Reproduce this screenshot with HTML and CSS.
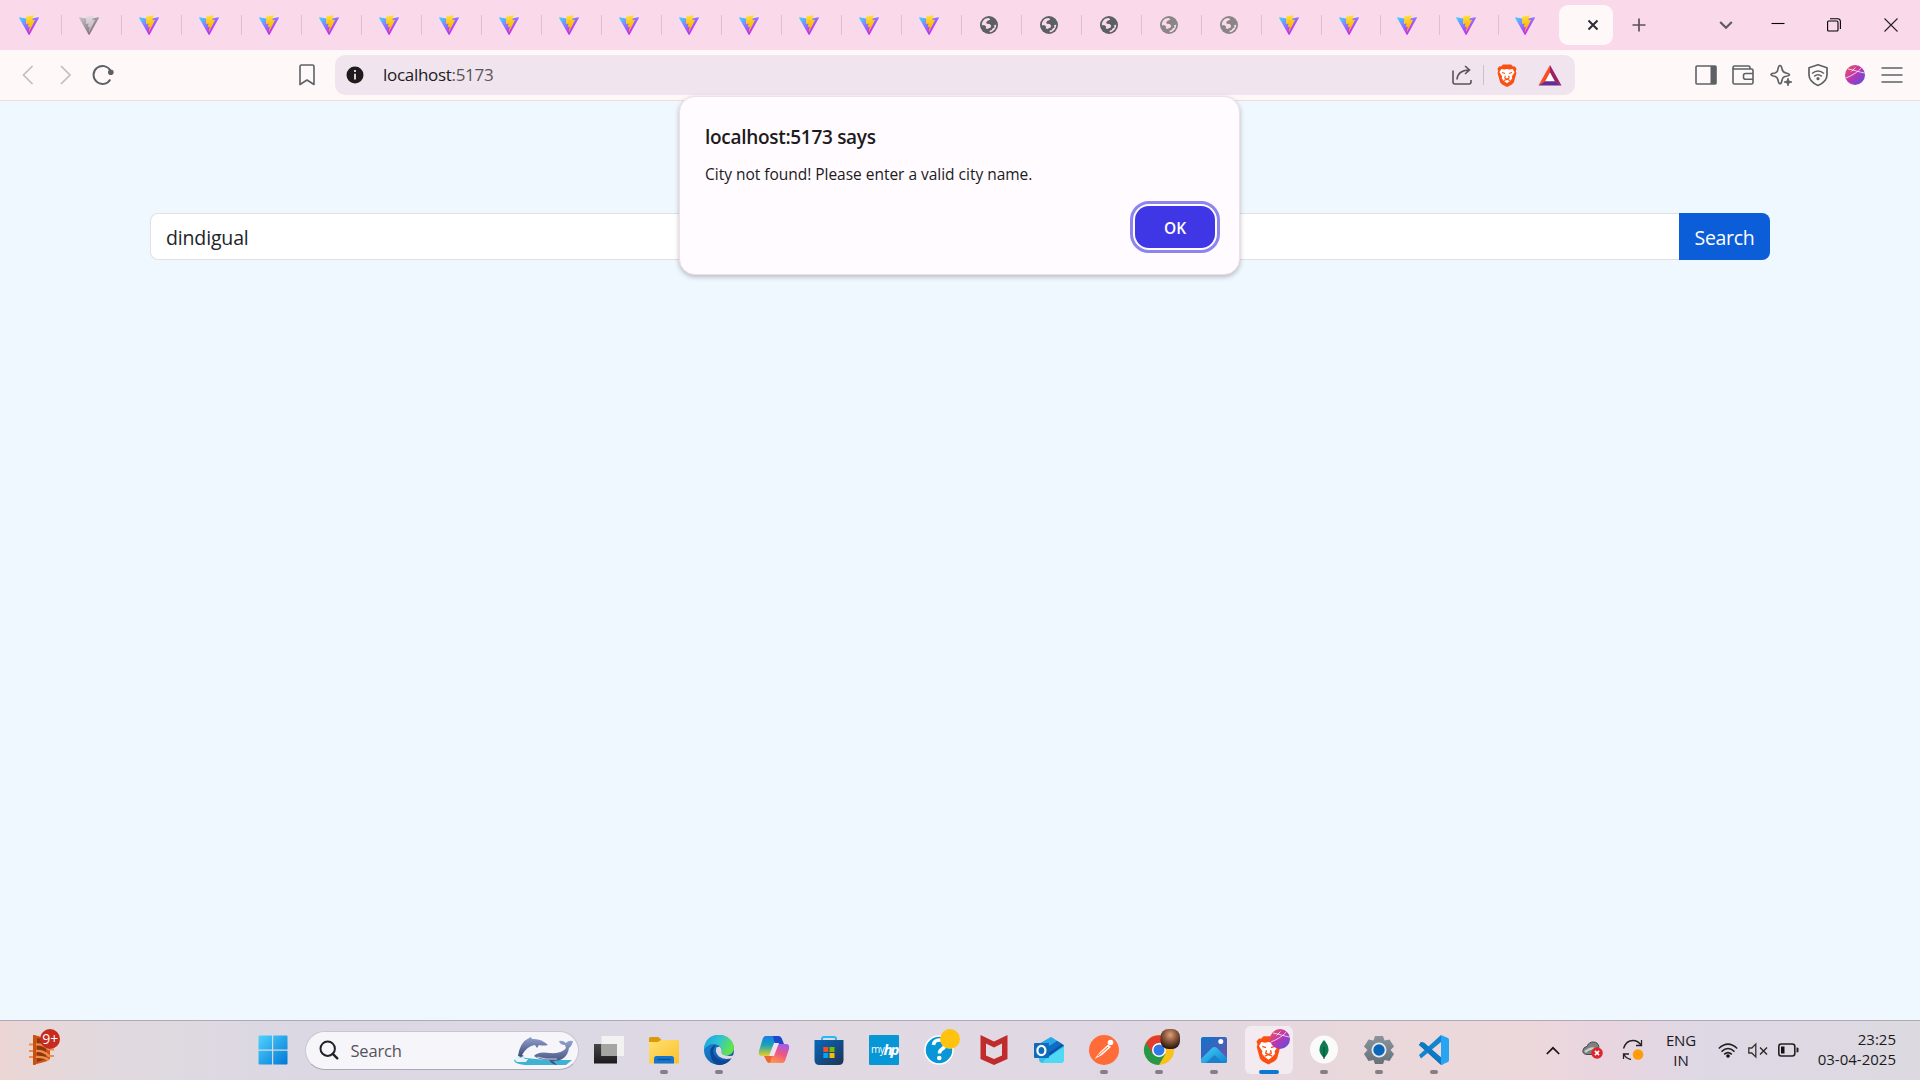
FILE: index.html
```html
<!DOCTYPE html>
<html lang="en">
<head>
<meta charset="utf-8">
<title>localhost:5173</title>
<link rel="stylesheet" href="styles.css">
</head>
<body>
<svg class="defs" aria-hidden="true">
  <defs>
    <linearGradient id="viteBody" x1="-.8%" x2="57.6%" y1="7.6%" y2="78.4%"><stop offset="0" stop-color="#41d1ff"/><stop offset="1" stop-color="#bd34fe"/></linearGradient>
    <linearGradient id="viteBolt" x1="43.4%" x2="50.3%" y1="2.2%" y2="89%"><stop offset="0" stop-color="#ffea83"/><stop offset=".083" stop-color="#ffdd35"/><stop offset="1" stop-color="#ffa800"/></linearGradient>
    <linearGradient id="orb" x1="0" y1="0" x2="1" y2="1"><stop offset="0" stop-color="#f6564b"/><stop offset=".5" stop-color="#b836b5"/><stop offset="1" stop-color="#4a55e0"/></linearGradient>
    <linearGradient id="win" x1="0" y1="0" x2="1" y2="1"><stop offset="0" stop-color="#4fd3ff"/><stop offset="1" stop-color="#0078d4"/></linearGradient>
    <linearGradient id="folder" x1="0" y1="0" x2="1" y2="1"><stop offset="0" stop-color="#ffe070"/><stop offset="1" stop-color="#fcc02c"/></linearGradient>
    <linearGradient id="edgeTop" x1="0" y1="0" x2="1" y2=".4"><stop offset="0" stop-color="#1f9be0"/><stop offset=".5" stop-color="#2cc3d5"/><stop offset="1" stop-color="#63e34b"/></linearGradient>
    <linearGradient id="edgeLow" x1="0" y1="0" x2="1" y2="1"><stop offset="0" stop-color="#1b8fdc"/><stop offset="1" stop-color="#0c4a9c"/></linearGradient>
    <linearGradient id="copA" x1="0" y1="0" x2="0" y2="1"><stop offset="0" stop-color="#1a7de8"/><stop offset=".45" stop-color="#17a3b8"/><stop offset="1" stop-color="#e9cf24"/></linearGradient>
    <linearGradient id="copB" x1=".7" y1="0" x2=".3" y2="1"><stop offset="0" stop-color="#a35bea"/><stop offset=".5" stop-color="#f1567f"/><stop offset="1" stop-color="#fb9a4c"/></linearGradient>
    <linearGradient id="store" x1="0" y1="0" x2="1" y2="1"><stop offset="0" stop-color="#0668bd"/><stop offset="1" stop-color="#1f3354"/></linearGradient>
    <linearGradient id="photo" x1="0" y1="0" x2="1" y2="1"><stop offset="0" stop-color="#0b74ce"/><stop offset="1" stop-color="#7450a8"/></linearGradient>
    <linearGradient id="hill" x1="0" y1="0" x2="1" y2="1"><stop offset="0" stop-color="#42d0fa"/><stop offset="1" stop-color="#0e83cf"/></linearGradient>
    <linearGradient id="gear" x1="0" y1="0" x2="0" y2="1"><stop offset="0" stop-color="#8b949b"/><stop offset="1" stop-color="#66717a"/></linearGradient>
    <linearGradient id="whale" x1="0" y1="0" x2="0" y2="1"><stop offset="0" stop-color="#92a3cf"/><stop offset="1" stop-color="#3c4775"/></linearGradient>
    <linearGradient id="taskA" x1="0" y1="0" x2="0" y2="1"><stop offset="0" stop-color="#474747"/><stop offset="1" stop-color="#1b1b1b"/></linearGradient>
    <radialGradient id="face" cx=".5" cy=".3" r=".7"><stop offset="0" stop-color="#dca27a"/><stop offset=".45" stop-color="#8f5a3d"/><stop offset="1" stop-color="#22140f"/></radialGradient>
  </defs>
  <symbol id="vite" viewBox="0 0 256 257">
    <path fill="url(#viteBody)" d="M255.153 37.938L134.897 252.976c-2.483 4.44-8.862 4.466-11.382.048L.875 37.958c-2.746-4.814 1.371-10.646 6.827-9.67l120.385 21.517a6.537 6.537 0 0 0 2.322-.004l117.867-21.483c5.438-.991 9.574 4.796 6.877 9.62Z"/>
    <path fill="url(#viteBolt)" d="M185.432.063L96.44 17.501a3.268 3.268 0 0 0-2.634 3.014l-5.474 92.456a3.268 3.268 0 0 0 3.997 3.378l24.777-5.718c2.318-.535 4.413 1.507 3.936 3.838l-7.361 36.047c-.495 2.426 1.782 4.5 4.151 3.78l15.304-4.649c2.372-.72 4.652 1.36 4.15 3.788l-11.698 56.621c-.732 3.542 3.979 5.473 5.943 2.437l1.313-2.028l72.516-144.72c1.215-2.423-.88-5.186-3.54-4.672l-25.505 4.922c-2.396.462-4.435-1.77-3.759-4.114l16.646-57.705c.677-2.35-1.37-4.583-3.769-4.113Z"/>
  </symbol>
  <symbol id="globe" viewBox="0 0 20 20">
    <circle cx="10" cy="10" r="9" fill="currentColor"/>
    <path fill="#fad9ea" d="M2.900 8.800C3.300 5.600 6 3 9.300 2.900L11.200 4 10.700 5.100 8.600 5.700 7.200 7.300 7.800 8.700 10.600 9 12.100 10.600 11.700 12.400 9.800 13.200 8.300 14.100 6.600 13.200 7.200 11.500 5 10.100 3 10.400z"/>
    <path fill="#fad9ea" d="M17.200 9.400C17.400 13.400 14.500 16.600 10.800 17.200L10.600 15.800 12.800 15 13.800 13.200 15.600 12.600 14.900 10.600z"/>
  </symbol>
  <symbol id="lion" viewBox="0 0 20 23">
    <path fill="#fb5012" d="M6 .5h8l2 2 1.600-.3 2 2.500-.8 2.300.6 2-2.500 9.300-2 2.200L10 23l-4.900-2.500-2-2.200L.6 9l.6-2L.4 4.700l2-2.500L4 2.500z"/>
    <path fill="#fff" d="M4.300 5l3 .6L10 5l2.700.6 3-.6 1.900 3.300-2.800 4.300.5 1.700-2 2.400L10 19.300l-3.300-2.600-2-2.400.5-1.700L2.400 8.300z"/>
    <path fill="none" stroke="#fb5012" stroke-width="1.100" d="M5 8.600l3 1 M15 8.600l-3 1 M8.400 11.700L7.800 14 10 15.200 12.200 14 11.600 11.700 M7 16.400l3-1.200 3 1.200"/>
  </symbol>
  <symbol id="planet" viewBox="0 0 20 20">
    <circle cx="10" cy="10" r="10" fill="url(#orb)"/>
    <path d="M1 13C7 10.500 13 7 16.500 2.800 M3 4C9 5 14 7 19.500 8 M6.500 6.500L10.500 2.500" fill="none" stroke="#fff" stroke-opacity=".75" stroke-width="1"/>
  </symbol>
</svg>

<header class="tabs">
  <div class="tab"><svg><use href="#vite"/></svg></div>
  <div class="tab asleep"><svg><use href="#vite"/></svg></div>
  <div class="tab"><svg><use href="#vite"/></svg></div>
  <div class="tab"><svg><use href="#vite"/></svg></div>
  <div class="tab"><svg><use href="#vite"/></svg></div>
  <div class="tab"><svg><use href="#vite"/></svg></div>
  <div class="tab"><svg><use href="#vite"/></svg></div>
  <div class="tab"><svg><use href="#vite"/></svg></div>
  <div class="tab"><svg><use href="#vite"/></svg></div>
  <div class="tab"><svg><use href="#vite"/></svg></div>
  <div class="tab"><svg><use href="#vite"/></svg></div>
  <div class="tab"><svg><use href="#vite"/></svg></div>
  <div class="tab"><svg><use href="#vite"/></svg></div>
  <div class="tab"><svg><use href="#vite"/></svg></div>
  <div class="tab"><svg><use href="#vite"/></svg></div>
  <div class="tab"><svg><use href="#vite"/></svg></div>
  <div class="tab"><svg><use href="#globe"/></svg></div>
  <div class="tab"><svg><use href="#globe"/></svg></div>
  <div class="tab"><svg><use href="#globe"/></svg></div>
  <div class="tab dim"><svg><use href="#globe"/></svg></div>
  <div class="tab dim"><svg><use href="#globe"/></svg></div>
  <div class="tab"><svg><use href="#vite"/></svg></div>
  <div class="tab narrow first"><svg><use href="#vite"/></svg></div>
  <div class="tab narrow"><svg><use href="#vite"/></svg></div>
  <div class="tab narrow"><svg><use href="#vite"/></svg></div>
  <div class="tab last"><svg><use href="#vite"/></svg></div>
  <div class="tab-active"><svg width="12" height="12" viewBox="0 0 12 12"><path d="M1.500 1.500l9 9M10.500 1.500l-9 9" stroke="#2b2b33" stroke-width="2"/></svg></div>
  <svg class="new-tab" width="14" height="14" viewBox="0 0 14 14"><path d="M7 .5v13M.5 7h13" stroke="#5a5358" stroke-width="1.700"/></svg>
  <div class="window-buttons">
    <svg width="14" height="14" viewBox="0 0 14 14"><path d="M1.200 4L7 9.800 12.800 4" fill="none" stroke="#5f5a60" stroke-width="2.200"/></svg>
    <svg width="14" height="14" viewBox="0 0 14 14"><path d="M.5 5.500h13" stroke="#000" stroke-width="1.100"/></svg>
    <svg width="14" height="14" viewBox="0 0 14 14"><path d="M.6 4q0-1 1-1h8q1.400 0 1.400 1.400V12q0 1-1 1H1.600q-1 0-1-1zM3 .7h7.500q2.900 0 2.900 2.900V11" fill="none" stroke="#000" stroke-width="1.100"/></svg>
    <svg width="14" height="14" viewBox="0 0 14 14"><path d="M.5.5l13 13M13.500.5l-13 13" stroke="#222" stroke-width="1.100"/></svg>
  </div>
</header>

<nav class="toolbar">
  <svg class="back" width="12" height="20" viewBox="0 0 12 20"><path d="M10.500 1L1.500 10l9 9" fill="none" stroke="#c3bdc1" stroke-width="1.700"/></svg>
  <svg class="forward" width="12" height="20" viewBox="0 0 12 20"><path d="M1 1l9 9-9 9" fill="none" stroke="#c3bdc1" stroke-width="1.700"/></svg>
  <svg class="reload" width="22" height="22" viewBox="0 0 22 22"><path d="M18.300 15.500A9 9 0 1 1 18.400 6.600" fill="none" stroke="#5d6166" stroke-width="1.900"/><circle cx="18.800" cy="8.300" r="2.800" fill="#5d6166"/></svg>
  <svg class="bookmark" width="16" height="22" viewBox="0 0 16 22"><path d="M1 2.500Q1 1 2.500 1h11Q15 1 15 2.500v18L8 16 1 20.500z" fill="none" stroke="#5d6166" stroke-width="1.600" stroke-linejoin="round"/></svg>
  <div class="address">
    <svg class="info" width="18" height="18" viewBox="0 0 18 18"><circle cx="9" cy="9" r="8.500" fill="#201a1c"/><path d="M9 4v2M9 7.700V13.500" stroke="#eee5ee" stroke-width="1.800"/></svg>
    <span class="url">localhost<i>:5173</i></span>
    <svg class="share" width="20" height="20" viewBox="0 0 20 20"><path d="M1 5.500V17Q1 19 3 19H17Q19 19 19 17v-2M5 14.500Q5.500 5.500 17 5M13 1l4.500 4L13 9" fill="none" stroke="#5c5259" stroke-width="1.600"/></svg>
    <span class="divider"></span>
    <svg class="brave" width="20" height="23"><use href="#lion"/></svg>
    <svg width="24" height="21" viewBox="0 0 24 21"><path d="M12 0L.5 20.500 8 16l4-8z" fill="#fb4b27"/><path d="M12 0l11.500 20.500L16 16l-4-8z" fill="#9e1f63"/><path d="M.5 20.500h23L16.500 16h-9z" fill="#662d91"/><path d="M12 7.500L16.800 16.300H7.200z" fill="#fff"/></svg>
  </div>
  <div class="actions">
    <svg width="22" height="20" viewBox="0 0 22 20"><rect x="1" y="1" width="20" height="18" rx="1" fill="none" stroke="#5d6166" stroke-width="1.600"/><path d="M15.500 1h5.500v18h-5.500z" fill="#5d6166"/></svg>
    <svg width="22" height="20" viewBox="0 0 22 20"><path d="M18 4V2.500Q18 1 16.500 1h-14Q1 1 1 2.500v15Q1 19 2.500 19h17q1.500 0 1.500-1.500V5.500Q21 4 19.500 4H2.500Q1 4 1 2.800M21 8.500h-7.500Q11.500 8.500 11.500 10.500v1.700q0 2 2 2H21" fill="none" stroke="#5d6166" stroke-width="1.600"/></svg>
    <svg width="22" height="22" viewBox="0 0 22 22"><path d="M10 1.500Q11.500 1.500 12 5q.5 3 4 4 3.500 1 3.500 1.700 0 1-4.500 1.800-2.500.5-3 4Q11.300 19.800 10 19.800T8 16q-.6-3-3.500-3.700Q1 11.500 1 10.500T5 9q2.600-.6 3-4Q8.500 1.500 10 1.500z" fill="#fff8f8" stroke="#5d6166" stroke-width="1.600"/><path d="M18 14l1 3 3 1-3 1-1 3-1-3-3-1 3-1z" fill="#5d6166" stroke="#5d6166" stroke-width=".8"/></svg>
    <svg width="22" height="22" viewBox="0 0 22 22"><path d="M11 .8l9 3v7q0 7-9 10.700Q2 17.800 2 10.800v-7z" fill="none" stroke="#5d6166" stroke-width="1.700" stroke-linejoin="round"/><path d="M5 9.500q6-5 12 0M7.200 12.300q3.800-3 7.600 0" fill="none" stroke="#5d6166" stroke-width="1.600"/><circle cx="11" cy="14.700" r="1.600" fill="#5d6166"/></svg>
    <svg width="20" height="20"><use href="#planet"/></svg>
    <svg class="menu" width="22" height="18" viewBox="0 0 22 18"><path d="M.5 2h21M.5 9h21M.5 16h21" stroke="#5d6166" stroke-width="1.700"/></svg>
  </div>
</nav>

<main class="page">
  <form class="search-group">
    <div class="field">dindigual</div>
    <div class="submit">Search</div>
  </form>
</main>

<section class="dialog" role="alertdialog">
  <h1>localhost:5173 says</h1>
  <p>City not found! Please enter a valid city name.</p>
  <div class="ok">OK</div>
</section>

<footer class="taskbar">
  <svg class="widget" width="40" height="40" viewBox="0 0 40 40">
    <path d="M8 5l5 1 12 4v19l-4 2.500L8 35z" fill="#cf5513"/><path d="M12 8l9 2v19l-9 3z" fill="#8f3709"/>
    <path d="M4 15h6q8-1 14 5h5M4 21.500h6q8-1 14 5h5M4 27.500h6q8-1 14 3" transform="translate(0 -.5)" fill="none" stroke="#ee8c4f" stroke-width="2.200"/><path d="M8 5l3 .6v28.800L8 35z" fill="#c9500f"/>
    <circle cx="25" cy="9" r="10" fill="#c72b20"/><text x="25.200" y="14" text-anchor="middle" class="badge-text">9+</text>
  </svg>
  <svg class="start" width="30" height="30" viewBox="0 0 30 30"><path d="M.5 1.500Q.5.500 1.500.500H14v14H.5zM15.200.5H28.500q1 0 1 1v13H15.200zM.5 15.700H14v13.800H1.500q-1 0-1-1zM15.200 15.700h14.300v12.800q0 1-1 1H15.200z" fill="url(#win)"/></svg>
  <div class="find">
    <svg width="20" height="20" viewBox="0 0 20 20"><circle cx="8.700" cy="8.700" r="7.200" fill="none" stroke="#222" stroke-width="2"/><path d="M13.800 13.800l4.500 4.500" stroke="#222" stroke-width="2.400" stroke-linecap="round"/></svg>
    <span>Search</span>
    <svg class="sea" width="60" height="32" viewBox="0 0 60 32">
      <path d="M1 24q3-4 12-2l20 2 26 0-6 5H12Q1 28 1 24z" fill="#3fb2d3"/><path d="M1 23l4-3 2 2 3-1 2 2 3 0-2 3H4z" fill="#e3f5fa"/>
      <path d="M5 20Q7 6 16 2l2-1 1 2q9-1 16 6-5 1-9 0l-2 3-2-3Q14 10 9 19l2 1-3 1z" fill="url(#whale)"/>
      <path d="M21 20q4-5 16-3 12 1 16-5l-1-3q-5 0-6-4 4-1 7 2 2-3 7-2-1 5-4 7-2 13-16 13l4 4q-6-1-8-5-10 0-15-4z" fill="url(#whale)"/>
      <path d="M24 21q8 3 20 2" stroke="#c7d1ea" stroke-width="1" fill="none"/>
    </svg>
  </div>
  <div class="apps">
    <div class="app"><svg viewBox="0 0 40 40"><path d="M5 14h23v19.500H5z" fill="url(#taskA)"/><path d="M12.500 6h22.500v20H12.500z" fill="#f3f3f3" opacity=".96"/><path d="M12.500 14H28v12H12.500z" fill="#a5a5a3"/></svg></div>
    <div class="app open"><svg viewBox="0 0 40 40"><path d="M5 8.500Q5 7 6.500 7h8l3 3v6H5z" fill="#dd9a08"/><path d="M5 12h9l3-2h16.500q1.500 0 1.500 1.500v21q0 1-1 1H5z" fill="url(#folder)"/><path d="M10 33.500v-5q0-2.500 2.500-2.500h15q2.500 0 2.500 2.500v5z" fill="#1375cd"/><path d="M13.500 29.500h13" stroke="#0b4f97" stroke-width="1.200"/></svg></div>
    <div class="app open"><svg viewBox="0 0 40 40"><circle cx="20" cy="20" r="15" fill="url(#edgeLow)"/><path d="M5 18Q7 5 20 5c9 0 15 6 15 13 0 5-4 7.500-8 7.500-4 0-6-1.500-4.500-3.500Q24 19 20 15.500 12 11 5 19z" fill="url(#edgeTop)"/><path d="M12 27Q9 17 17 14.500 11 22 18 28q7 5 14 1-5 6-12 6-6-1-8-8z" fill="#0b4796"/><path d="M17.500 17.500q-2 5 2.500 9 5 4 13.500 1.500l1.500-3q-3 1.500-8 .5-5-.5-4.500-3.500 1-3-2-5.500z" fill="#e0d9e3"/></svg></div>
    <div class="app"><svg viewBox="0 0 40 40"><path d="M12 6h12q2.500 0 1.500 3l-5 14q-1 3-4 3H8q-4 0-3-5L8 11q1-5 4-5z" fill="url(#copA)"/><path d="M19 6h5q3 0 4 3l2 5h-6q-3 0-4-3z" fill="#1c49cc"/><path d="M28 33H16q-3 0-1.500-3l5-13q1-3 4-3H32q4 0 3 5l-3 9q-1 5-4 5z" fill="url(#copB)"/><path d="M20 13h5l-5 13h-5z" fill="#eee3ee"/><path d="M10 26h8l-2 7q-3 0-4-3z" fill="#ed6631"/></svg></div>
    <div class="app"><svg viewBox="0 0 40 40"><path d="M13 12V9q0-2 2-2h10q2 0 2 2v3" fill="none" stroke="#27b9f2" stroke-width="2"/><path d="M5.500 10h29v20q0 5-5 5h-19q-5 0-5-5z" fill="url(#store)"/><path d="M14.300 17h5v5h-5z" fill="#f25022"/><path d="M20.500 17h5v5h-5z" fill="#7fba00"/><path d="M14.300 23h5v5h-5z" fill="#00a4ef"/><path d="M20.500 23h5v5h-5z" fill="#ffb900"/></svg></div>
    <div class="app"><svg viewBox="0 0 40 40"><rect x="5" y="5" width="30" height="30" rx="1" fill="#0796d6"/><text x="7" y="23" class="hp-my">my</text><text x="19.500" y="25" class="hp-hp">hp</text></svg></div>
    <div class="app"><svg viewBox="0 0 40 40"><circle cx="20" cy="20" r="14" fill="#0796d6" stroke="#fff" stroke-width="1.500"/><path d="M14.500 15q.5-5 6-5t5.500 4.500q0 3-3.500 5-2 1.200-2 4" fill="none" stroke="#fff" stroke-width="3.600"/><circle cx="20.300" cy="28" r="2.300" fill="#fff"/><circle cx="31" cy="9" r="10" fill="#ffc20e"/></svg></div>
    <div class="app"><svg viewBox="0 0 40 40"><path d="M6.500 5L20 11.500 33.500 5v24L20 35 6.500 29z" fill="#c02b2b"/><path d="M12 13.500l8 4 8-4v12L20 29l-8-3.500z" fill="#e2d9e2"/></svg></div>
    <div class="app"><svg viewBox="0 0 40 40"><path d="M10 14L22 7l13 8v14q0 4-4 4H14q-4 0-4-4z" fill="#2fc4ea"/><path d="M10 14L22 7l6 4-14 9z" fill="#28a8ea"/><path d="M28 11l7 4.500L20 26v-8z" fill="#0a50a5"/><path d="M28 11l5 3-13 9v-7z" fill="#0f6cc4"/><path d="M14 33q0-3 6-6L35 17v12q0 4-4 4z" fill="#50d9f5"/><rect x="5" y="13" width="15" height="15" rx="1" fill="#0f6cbd"/><ellipse cx="12.400" cy="20.500" rx="4" ry="4.700" fill="none" stroke="#fff" stroke-width="2.200"/></svg></div>
    <div class="app open"><svg viewBox="0 0 40 40"><circle cx="20" cy="20" r="15" fill="#ff6c37"/><path d="M10.500 29l6-7.500 7.500-7 3 2.500-9 8z" fill="#fff" opacity=".95"/><circle cx="26.500" cy="12.500" r="2.800" fill="#fff"/><path d="M14 26l10-9" stroke="#ff6c37"/></svg></div>
    <div class="app open"><svg viewBox="0 0 40 40"><circle cx="20" cy="20" r="15" fill="#fbc116"/><path d="M7 12.500A15 15 0 0 0 20 35l6.500-11.200L20 20 7 12.500z" fill="#279847"/><path d="M20 12.800h13A15 15 0 0 0 7 12.500l6.500 11z" fill="#e33b2e"/><circle cx="20" cy="20" r="7" fill="#fff"/><circle cx="20" cy="20" r="5.500" fill="#2f78e8"/><rect x="21.500" y="-1" width="19.500" height="20" rx="8" fill="url(#face)"/></svg></div>
    <div class="app open"><svg viewBox="0 0 40 40"><rect x="7" y="7" width="26" height="26" rx="2" fill="url(#photo)"/><path d="M7 29l11-11q2.500-2 5 0l10 10v3q0 2-2 2H9q-2 0-2-2z" fill="url(#hill)"/><path d="M12 33l8.500-8 8.500 8z" fill="#1c80ca"/><circle cx="26.800" cy="11.500" r="2.500" fill="#fff"/></svg></div>
    <div class="app active"><svg viewBox="0 0 40 40"><use href="#lion" x="7" y="5" width="25" height="30"/><use href="#planet" x="21" y="-1" width="20" height="20"/></svg></div>
    <div class="app open"><svg viewBox="0 0 40 40"><circle cx="20" cy="19.500" r="14" fill="#fafafa"/><path d="M20 10q9 10 0 18-9-8 0-18z" fill="#0d7a51"/><path d="M20 17v12" stroke="#064b34" stroke-width="1"/></svg></div>
    <div class="app open"><svg viewBox="0 0 40 40"><path d="M16 6h8l1.500 4.500 5-1 4.500 7-3.500 3.500 3.500 4-4.500 7-5-1L24 34h-8l-1.500-4-5 1L5 24l3.500-4L5 16.500l4.500-7 5 1z" fill="url(#gear)"/><circle cx="20" cy="20" r="7.500" fill="#e7e9ea"/><circle cx="20" cy="20" r="5.700" fill="#0a66b8"/></svg></div>
    <div class="app open"><svg viewBox="0 0 40 40"><path d="M7 12l20 16.500V35L5 15z" fill="#0a6eb6"/><path d="M7 28.500L27 12V5L5 25z" fill="#1385cf"/><path d="M5 15l2-3 3 .5L29 29v6L8 17z" fill="#0b79c5"/><path d="M27 5l7 3q1 .5 1 2v20q0 1.500-1 2l-7 3z" fill="#27a5f3"/></svg></div>
  </div>
  <div class="tray">
    <svg class="more" width="14" height="9" viewBox="0 0 14 9"><path d="M.8 8L7 1.800 13.200 8" fill="none" stroke="#151515" stroke-width="1.700"/></svg>
    <svg class="cloud" width="21" height="20" viewBox="0 0 21 20"><path d="M5 14.500Q0 14 1 10q.5-3 4-3.500Q7 1.500 11.500 2q4.500 0 5.500 5l-4 7.500z" fill="#7c8280" stroke="#454b49" stroke-width="1"/><path d="M3 12q6-5 10-3" stroke="#c9cfcd" stroke-width="2.400" fill="none"/><circle cx="15" cy="13" r="5.800" fill="#dc2630"/><path d="M12.900 10.900l4.200 4.200M17.100 10.900l-4.200 4.200" stroke="#fff" stroke-width="1.500"/></svg>
    <svg class="sync" width="22" height="22" viewBox="0 0 22 22"><path d="M1.500 9.500Q4 1.500 11 1.500q5 0 8.500 5M14 6.500h5.500V1M9 20.500q-5-1-7-5M1.500 20v-5H7" fill="none" stroke="#222" stroke-width="1.300"/><circle cx="16" cy="15.500" r="5.300" fill="#ff9c0a"/></svg>
    <div class="lang">ENG<br>IN</div>
    <svg class="wifi" width="20" height="15" viewBox="0 0 20 15"><path d="M.8 5.500q9.200-8.700 18.400 0M3.500 8.600q6.500-6.200 13 0M6.200 11.400q3.800-3.600 7.600 0" fill="none" stroke="#222" stroke-width="1.500"/><circle cx="10" cy="13" r="1.800" fill="#111"/></svg>
    <svg class="mute" width="20" height="15" viewBox="0 0 20 15"><path d="M.8 5h3l4-4v13l-4-4h-3z" fill="none" stroke="#333" stroke-width="1.300"/><path d="M12 4.500l7 7M19 4.500l-7 7" stroke="#222" stroke-width="1.300"/></svg>
    <svg class="battery" width="21" height="14" viewBox="0 0 21 14"><rect x=".8" y="1" width="16" height="12" rx="2.500" fill="none" stroke="#222" stroke-width="1.600"/><rect x="3" y="3.500" width="3.500" height="7" fill="#111"/><path d="M18.500 4.500q2 0 2 1v3q0 1-2 1z" fill="#222"/></svg>
    <div class="clock">23:25<br>03-04-2025</div>
  </div>
</footer>
</body>
</html>
```
FILE: styles.css
```css
* { box-sizing: border-box; }

body {
  margin: 0;
  width: 1920px;
  height: 1080px;
  overflow: hidden;
  display: flex;
  flex-direction: column;
  position: relative;
  font-family: "Open Sans", "Noto Sans", sans-serif;
}

svg { display: block; flex: none; overflow: visible; }
.defs { position: absolute; width: 0; height: 0; }

/* Tab strip */
.tabs {
  height: 50px;
  flex: none;
  display: flex;
  align-items: center;
  padding-left: 2px;
  background: #fad9ea;
}
.tab {
  flex: none;
  width: 60px;
  height: 20px;
  padding-left: 17px;
  border-right: 1px solid #dcc0cf;
  color: #5b6065;
}
.tab svg { width: 20px; height: 20px; }
.tab.asleep svg { filter: grayscale(1); opacity: .75; }
.tab.dim { color: #8b8686; }
.tab.narrow { width: 59px; padding-left: 16px; }
.tab.narrow.first { padding-left: 17px; }
.tab.last { width: 60px; padding-left: 16px; border-right: 0; }
.tab-active {
  flex: none;
  width: 54px;
  height: 40px;
  border-radius: 9px;
  background: #fff8f8;
  display: flex;
  align-items: center;
  padding-left: 27.500px;
}
.new-tab { margin-left: 18.500px; }
.window-buttons {
  display: flex;
  margin-left: 73.500px;
}
.window-buttons svg:nth-child(2) { margin-left: 37.500px; }
.window-buttons svg:nth-child(3) { margin-left: 42px; }
.window-buttons svg:nth-child(4) { margin-left: 43.500px; }

/* Navigation toolbar */
.toolbar {
  height: 51px;
  flex: none;
  display: flex;
  align-items: center;
  border-bottom: 1px solid #f1dbdf;
  background: #fff8f8;
}
.back { margin-left: 22px; }
.forward { margin-left: 26px; }
.reload { margin-left: 19.500px; }
.bookmark { margin-left: 185px; }
.address {
  flex: none;
  width: 1240px;
  height: 40px;
  margin-left: 20.500px;
  padding: 0 13px 0 11px;
  display: flex;
  align-items: center;
  border-radius: 10px;
  background: #f0e5ee;
}
.url {
  margin: 0 auto 1px 19px;
  font-size: 17px;
  letter-spacing: -.3px;
  color: #201a1c;
}
.url i { font-style: normal; color: #5c5359; }
.divider { width: 1px; height: 20px; margin: 0 13px 0 11px; background: #c9c2c9; }
.brave { margin-right: 21px; }
.actions {
  display: flex;
  align-items: center;
  gap: 15.600px;
  margin-left: 119.500px;
}
.menu { margin-left: 1px; }

/* Page */
.page { flex: 1; background: #f0f8ff; }
.search-group {
  width: 1620px;
  height: 47px;
  margin: 112px auto 0;
  display: flex;
  font-size: 19.500px;
}
.field {
  flex: 1;
  padding-left: 15px;
  border: 1px solid #dee2e6;
  border-right: 0;
  border-radius: 8px 0 0 8px;
  background: #fff;
  color: #212529;
  line-height: 48px;
  letter-spacing: -.15px;
}
.submit {
  width: 91px;
  border-radius: 0 8px 8px 0;
  background: #0b5ed7;
  color: #fff;
  line-height: 50px;
  text-align: center;
  letter-spacing: -.3px;
}

/* Alert */
.dialog {
  position: absolute;
  left: 679px;
  top: 95.500px;
  width: 561px;
  height: 179px;
  padding: 24px 24px 0 25px;
  display: flex;
  flex-direction: column;
  border: 1px solid #f0dfe5;
  border-radius: 16px;
  background: #fffbff;
  box-shadow: 0 2px 5px rgba(0, 0, 0, .25);
  color: #201a1c;
}
.dialog h1 {
  margin: 0;
  font-size: 19px;
  font-weight: 600;
  line-height: 32px;
  letter-spacing: -.3px;
  white-space: nowrap;
}
.dialog p {
  margin: 9px 0 0;
  font-size: 15.500px;
  line-height: 24px;
  letter-spacing: -.02px;
  white-space: nowrap;
}
.ok {
  align-self: flex-end;
  width: 80px;
  height: 42px;
  margin-top: 20.500px;
  border-radius: 14px;
  background: #3f37e6;
  outline: 3px solid #8b85f0;
  outline-offset: 2px;
  color: #fff;
  font-size: 15.500px;
  font-weight: 600;
  line-height: 44px;
  text-align: center;
}

/* Taskbar */
.taskbar {
  height: 60px;
  flex: none;
  display: flex;
  align-items: center;
  padding-bottom: 1px;
  border-top: 1px solid #b1a9b5;
  background: linear-gradient(90deg, #ecd6d5 0, #e0d9de 110px, #dbd8e4 300px, #dcd8e4 600px, #e1d9e2 850px, #dfd8e4 1120px, #e9d8dc 1350px, #ecd8da 1520px, #e9d5df 1600px, #ded8e5 1700px, #ddd9e0 1920px);
}
.widget { margin-left: 25px; }
.badge-text { font-size: 14px; fill: #fff; }
.start { margin-left: 192.500px; }
.find {
  flex: none;
  width: 274px;
  height: 39px;
  margin-left: 17px;
  padding: 0 5px 0 13px;
  display: flex;
  align-items: center;
  border: 1px solid #cbc5d2;
  border-bottom-color: #aea8b4;
  border-radius: 20px;
  background: #f6f5f9;
  font-size: 16.500px;
  letter-spacing: -.2px;
  color: #55535a;
}
.find span { margin: 0 auto 0 12px; }
.find .sea { margin-top: 4px; }
.apps { display: flex; margin-left: 3px; }
.app {
  position: relative;
  width: 55px;
  height: 48px;
  display: flex;
  align-items: center;
  justify-content: center;
}
.app svg { width: 40px; height: 40px; }
.app.open::after, .app.active::after {
  content: "";
  position: absolute;
  bottom: 0;
  width: 8px;
  height: 4px;
  border-radius: 2px;
  background: #857e86;
}
.app.active {
  width: 48px;
  margin: 0 3.500px;
  border-radius: 6px;
  background: #f4ebf1;
}
.app.active::after { width: 20px; background: #0a78d4; }
.hp-my { font-size: 10px; fill: #fff; letter-spacing: -.5px; }
.hp-hp { font-size: 15px; font-weight: 700; font-style: italic; fill: #fff; letter-spacing: -2px; }

.tray {
  display: flex;
  align-items: center;
  flex: 1;
  padding: 0 24px 0 84.500px;
  font-size: 15px;
  line-height: 20px;
  color: #1c1a1d;
}
.cloud { margin-left: 22px; }
.sync { margin-left: 19px; }
.lang { margin-left: 21px; width: 32px; text-align: center; letter-spacing: -.1px; }
.wifi { margin-left: 21px; }
.mute { margin-left: 10px; }
.battery { margin-left: 10px; }
.clock { margin-left: auto; text-align: right; white-space: nowrap; padding-bottom: 2px; }
```
